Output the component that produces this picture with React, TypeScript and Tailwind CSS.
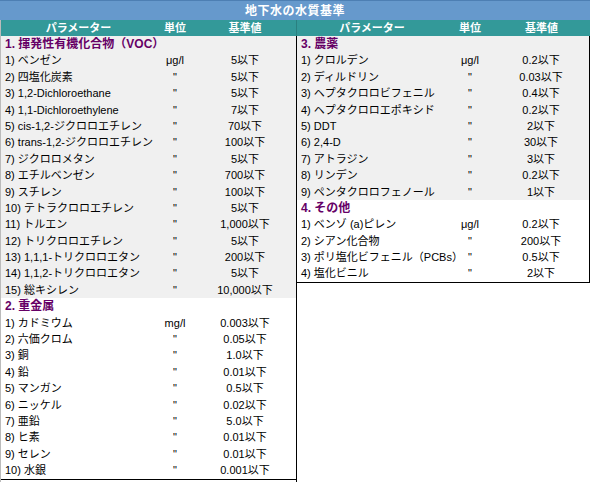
import React from 'react'

type Row = { name: string; unit: string; value: string }
type Section = { title: string; gray: boolean; rows: Row[] }

const D = '"'

const left: Section[] = [
  {
    title: '1. 揮発性有機化合物（VOC）',
    gray: true,
    rows: [
      { name: '1) ベンゼン', unit: 'μg/l', value: '5以下' },
      { name: '2) 四塩化炭素', unit: D, value: '5以下' },
      { name: '3) 1,2-Dichloroethane', unit: D, value: '5以下' },
      { name: '4) 1,1-Dichloroethylene', unit: D, value: '7以下' },
      { name: '5) cis-1,2-ジクロロエチレン', unit: D, value: '70以下' },
      { name: '6) trans-1,2-ジクロロエチレン', unit: D, value: '100以下' },
      { name: '7) ジクロロメタン', unit: D, value: '5以下' },
      { name: '8) エチルベンゼン', unit: D, value: '700以下' },
      { name: '9) スチレン', unit: D, value: '100以下' },
      { name: '10) テトラクロロエチレン', unit: D, value: '5以下' },
      { name: '11) トルエン', unit: D, value: '1,000以下' },
      { name: '12) トリクロロエチレン', unit: D, value: '5以下' },
      { name: '13) 1,1,1-トリクロロエタン', unit: D, value: '200以下' },
      { name: '14) 1,1,2-トリクロロエタン', unit: D, value: '5以下' },
      { name: '15) 総キシレン', unit: D, value: '10,000以下' },
    ],
  },
  {
    title: '2. 重金属',
    gray: false,
    rows: [
      { name: '1) カドミウム', unit: 'mg/l', value: '0.003以下' },
      { name: '2) 六価クロム', unit: D, value: '0.05以下' },
      { name: '3) 銅', unit: D, value: '1.0以下' },
      { name: '4) 鉛', unit: D, value: '0.01以下' },
      { name: '5) マンガン', unit: D, value: '0.5以下' },
      { name: '6) ニッケル', unit: D, value: '0.02以下' },
      { name: '7) 亜鉛', unit: D, value: '5.0以下' },
      { name: '8) ヒ素', unit: D, value: '0.01以下' },
      { name: '9) セレン', unit: D, value: '0.01以下' },
      { name: '10) 水銀', unit: D, value: '0.001以下' },
    ],
  },
]

const right: Section[] = [
  {
    title: '3. 農薬',
    gray: true,
    rows: [
      { name: '1) クロルデン', unit: 'μg/l', value: '0.2以下' },
      { name: '2) ディルドリン', unit: D, value: '0.03以下' },
      { name: '3) ヘプタクロロビフェニル', unit: D, value: '0.4以下' },
      { name: '4) ヘプタクロロエポキシド', unit: D, value: '0.2以下' },
      { name: '5) DDT', unit: D, value: '2以下' },
      { name: '6) 2,4-D', unit: D, value: '30以下' },
      { name: '7) アトラジン', unit: D, value: '3以下' },
      { name: '8) リンデン', unit: D, value: '0.2以下' },
      { name: '9) ペンタクロロフェノール', unit: D, value: '1以下' },
    ],
  },
  {
    title: '4. その他',
    gray: false,
    rows: [
      { name: '1) ベンゾ (a)ピレン', unit: 'μg/l', value: '0.2以下' },
      { name: '2) シアン化合物', unit: D, value: '200以下' },
      { name: '3) ポリ塩化ビフェニル（PCBs）', unit: D, value: '0.5以下' },
      { name: '4) 塩化ビニル', unit: D, value: '2以下' },
    ],
  },
]

function Table({ sections, cols }: { sections: Section[]; cols: string }) {
  return (
    <div>
      {sections.map((s) => (
        <div key={s.title} className={s.gray ? 'bg-[#f0f0f0]' : 'bg-white'}>
          <div className="h-[16.4px] leading-[16.4px] pl-[4px] font-bold text-[12px] text-[#660066]">
            {s.title}
          </div>
          {s.rows.map((r) => (
            <div key={r.name} className={`grid ${cols} h-[16.4px] leading-[16.4px] text-[11px] text-black`}>
              <div className="pl-[4px] whitespace-nowrap">{r.name}</div>
              <div className="text-center">{r.unit}</div>
              <div className="text-center">{r.value}</div>
            </div>
          ))}
        </div>
      ))}
    </div>
  )
}

function Header({ cols }: { cols: string }) {
  return (
    <div className={`grid ${cols} h-[16px] leading-[16px] bg-[#339999] text-white font-bold text-[11px]`}>
      <div className="text-center">パラメーター</div>
      <div className="text-center">単位</div>
      <div className="text-center">基準値</div>
    </div>
  )
}

export default function App() {
  return (
    <div
      className="w-[593px] h-[482px] bg-white overflow-hidden"
      style={{ fontFamily: '"Liberation Sans", "Noto Sans CJK JP", sans-serif' }}
    >
      <div className="w-[590px]">
        <div className="h-[20px] leading-[20px] bg-[#6699cc] border-t border-[#4d7fb3] text-white font-bold text-[12px] tracking-[0.5px] text-center">
          地下水の水質基準
        </div>
        <div className="flex">
          <div className="w-[296px] border-l border-[#bbbbbb]">
            <Header cols="grid-cols-[155px_38px_102px]" />
            <div className="border-b border-black">
              <Table sections={left} cols="grid-cols-[155px_38px_102px]" />
            </div>
          </div>
          <div className="w-[294px] flex flex-col h-[462px]">
            <div className="border-l border-[#2a8080]">
              <Header cols="grid-cols-[150px_46px_97px]" />
            </div>
            <div className="flex-1 border-l border-black">
              <div className="border-b border-r border-black">
                <Table sections={right} cols="grid-cols-[150px_46px_96px]" />
              </div>
            </div>
          </div>
        </div>
      </div>
    </div>
  )
}
